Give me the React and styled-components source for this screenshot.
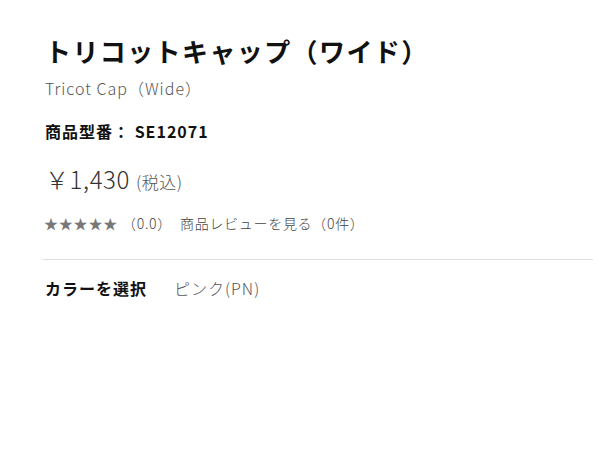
import React from "react";
import styled, { createGlobalStyle } from "styled-components";

const GlobalStyle = createGlobalStyle`
  body {
    margin: 0;
    background: #fff;
    font-family: "Noto Sans CJK JP", "Noto Sans", sans-serif;
    color: #222;
  }
`;

export default function App() {
  return (
    <>
      <GlobalStyle />
      <Product>
        <Title>トリコットキャップ（ワイド）</Title>
        <EnglishName>Tricot Cap（Wide）</EnglishName>
        <ModelNo>
          商品型番： <span>SE12071</span>
        </ModelNo>
        <Price>
          ￥1,430<Tax>(税込)</Tax>
        </Price>
        <Review>
          <Stars>★★★★★</Stars>
          <span>（0.0）</span>
          <ReviewLink>商品レビューを見る（0件）</ReviewLink>
        </Review>
        <Divider />
        <ColorRow>
          <ColorLabel>カラーを選択</ColorLabel>
          <ColorValue>ピンク(PN)</ColorValue>
        </ColorRow>
      </Product>
    </>
  );
}

const Product = styled.div`
  padding: 31px 7px 0 43px;
`;

const Title = styled.h1`
  margin: 0 0 0 2px;
  font-size: 26px;
  font-weight: 700;
  line-height: 40px;
  letter-spacing: 1.4px;
  color: #111;
`;

const EnglishName = styled.div`
  margin: 5px 0 0 2px;
  font-size: 16px;
  font-weight: 300;
  line-height: 24px;
  letter-spacing: 1px;
  color: #555;
`;

const ModelNo = styled.div`
  margin: 19px 0 0 2px;
  font-size: 16px;
  font-weight: 700;
  line-height: 24px;
  letter-spacing: 1px;
  color: #111;
`;

const Price = styled.div`
  margin: 19px 0 0 2px;
  font-size: 24px;
  font-weight: 300;
  line-height: 34px;
  letter-spacing: 0.6px;
  color: #333;
`;

const Tax = styled.span`
  margin-left: 6px;
  font-size: 17px;
  letter-spacing: 0.5px;
  color: #555;
`;

const Review = styled.div`
  display: flex;
  align-items: center;
  margin: 14px 0 0 1px;
  font-size: 14px;
  line-height: 20px;
  letter-spacing: 0.7px;
  color: #444;
  font-weight: 300;
`;

const Stars = styled.span`
  color: #777;
  letter-spacing: 0.8px;
  margin-right: 4px;
`;

const ReviewLink = styled.span`
  margin-left: 8px;
`;

const Divider = styled.hr`
  margin: 26px 0 0;
  border: 0;
  border-top: 1px solid #ddd;
`;

const ColorRow = styled.div`
  display: flex;
  gap: 27px;
  margin: 16px 0 0 2px;
  font-size: 16px;
  line-height: 24px;
  letter-spacing: 1px;
`;

const ColorLabel = styled.span`
  font-weight: 700;
  color: #111;
`;

const ColorValue = styled.span`
  font-weight: 300;
  color: #555;
`;
